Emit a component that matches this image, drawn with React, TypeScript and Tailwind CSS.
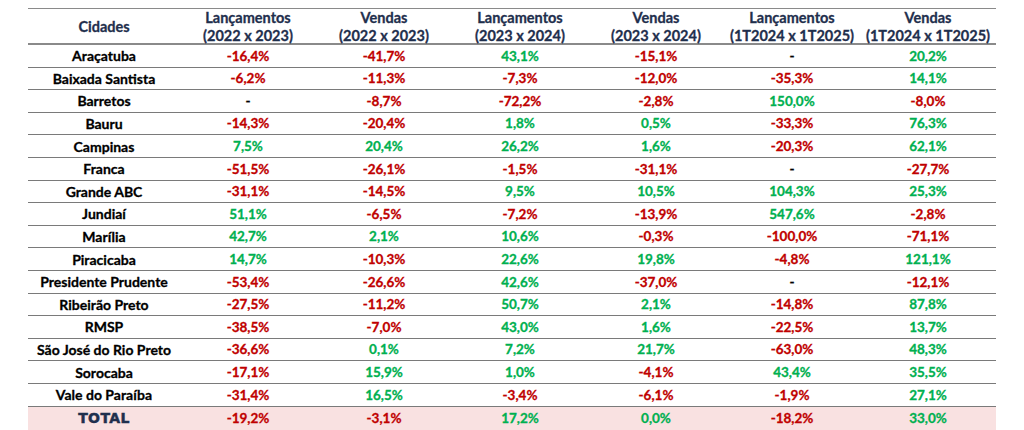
import React from "react";

const rows: [string, string[]][] = [
  ["Araçatuba", ["-16,4%", "-41,7%", "43,1%", "-15,1%", "-", "20,2%"]],
  ["Baixada Santista", ["-6,2%", "-11,3%", "-7,3%", "-12,0%", "-35,3%", "14,1%"]],
  ["Barretos", ["-", "-8,7%", "-72,2%", "-2,8%", "150,0%", "-8,0%"]],
  ["Bauru", ["-14,3%", "-20,4%", "1,8%", "0,5%", "-33,3%", "76,3%"]],
  ["Campinas", ["7,5%", "20,4%", "26,2%", "1,6%", "-20,3%", "62,1%"]],
  ["Franca", ["-51,5%", "-26,1%", "-1,5%", "-31,1%", "-", "-27,7%"]],
  ["Grande ABC", ["-31,1%", "-14,5%", "9,5%", "10,5%", "104,3%", "25,3%"]],
  ["Jundiaí", ["51,1%", "-6,5%", "-7,2%", "-13,9%", "547,6%", "-2,8%"]],
  ["Marília", ["42,7%", "2,1%", "10,6%", "-0,3%", "-100,0%", "-71,1%"]],
  ["Piracicaba", ["14,7%", "-10,3%", "22,6%", "19,8%", "-4,8%", "121,1%"]],
  ["Presidente Prudente", ["-53,4%", "-26,6%", "42,6%", "-37,0%", "-", "-12,1%"]],
  ["Ribeirão Preto", ["-27,5%", "-11,2%", "50,7%", "2,1%", "-14,8%", "87,8%"]],
  ["RMSP", ["-38,5%", "-7,0%", "43,0%", "1,6%", "-22,5%", "13,7%"]],
  ["São José do Rio Preto", ["-36,6%", "0,1%", "7,2%", "21,7%", "-63,0%", "48,3%"]],
  ["Sorocaba", ["-17,1%", "15,9%", "1,0%", "-4,1%", "43,4%", "35,5%"]],
  ["Vale do Paraíba", ["-31,4%", "16,5%", "-3,4%", "-6,1%", "-1,9%", "27,1%"]],
];

const total = ["-19,2%", "-3,1%", "17,2%", "0,0%", "-18,2%", "33,0%"];

const headers: [string, string][] = [
  ["Lançamentos", "(2022 x 2023)"],
  ["Vendas", "(2022 x 2023)"],
  ["Lançamentos", "(2023 x 2024)"],
  ["Vendas", "(2023 x 2024)"],
  ["Lançamentos", "(1T2024 x 1T2025)"],
  ["Vendas", "(1T2024 x 1T2025)"],
];

function colorOf(v: string) {
  if (v === "-") return "text-black";
  if (v.startsWith("-")) return "text-[#c00000]";
  return "text-[#00b050]";
}

const grid = "grid grid-cols-[152px_136px_136px_136px_136px_136px_136px]";

export default function App() {
  return (
    <div
      className="w-[1024px] h-[430px] overflow-hidden bg-white pl-[28px] pt-[8px]"
      style={{ fontFamily: "Lato, 'Open Sans', sans-serif" }}
    >
      <div className="w-[968px]">
        <div className={`${grid} h-[37px] border-t border-b-2 border-[#8a8a8a] text-[#1f2f4d] font-bold text-[14.5px] leading-[18px] [-webkit-text-stroke:0.3px]`}>
          <div className="flex items-center justify-center">Cidades</div>
          {headers.map(([a, b], i) => (
            <div key={i} className="flex flex-col items-center justify-center">
              <span>{a}</span>
              <span>{b}</span>
            </div>
          ))}
        </div>
        {rows.map(([city, vals]) => (
          <div
            key={city}
            className={`${grid} h-[22.6px] border-b border-[#7a7a7a] font-bold text-[14px] items-center [-webkit-text-stroke:0.3px]`}
          >
            <div className="text-center text-black">{city}</div>
            {vals.map((v, i) => (
              <div key={i} className={`text-center text-[13.5px] ${colorOf(v)}`}>
                {v}
              </div>
            ))}
          </div>
        ))}
        <div className={`${grid} h-[24px] bg-[#f9e1e1] font-bold text-[14px] items-center [-webkit-text-stroke:0.3px]`}>
          <div
            className="text-center text-[#1f2f4d] font-black text-[14px] tracking-[0.4px] [-webkit-text-stroke:0.5px]"
            style={{ fontFamily: "'DejaVu Sans', sans-serif" }}
          >
            TOTAL
          </div>
          {total.map((v, i) => (
            <div key={i} className={`text-center text-[13.5px] ${colorOf(v)}`}>
              {v}
            </div>
          ))}
        </div>
      </div>
    </div>
  );
}
